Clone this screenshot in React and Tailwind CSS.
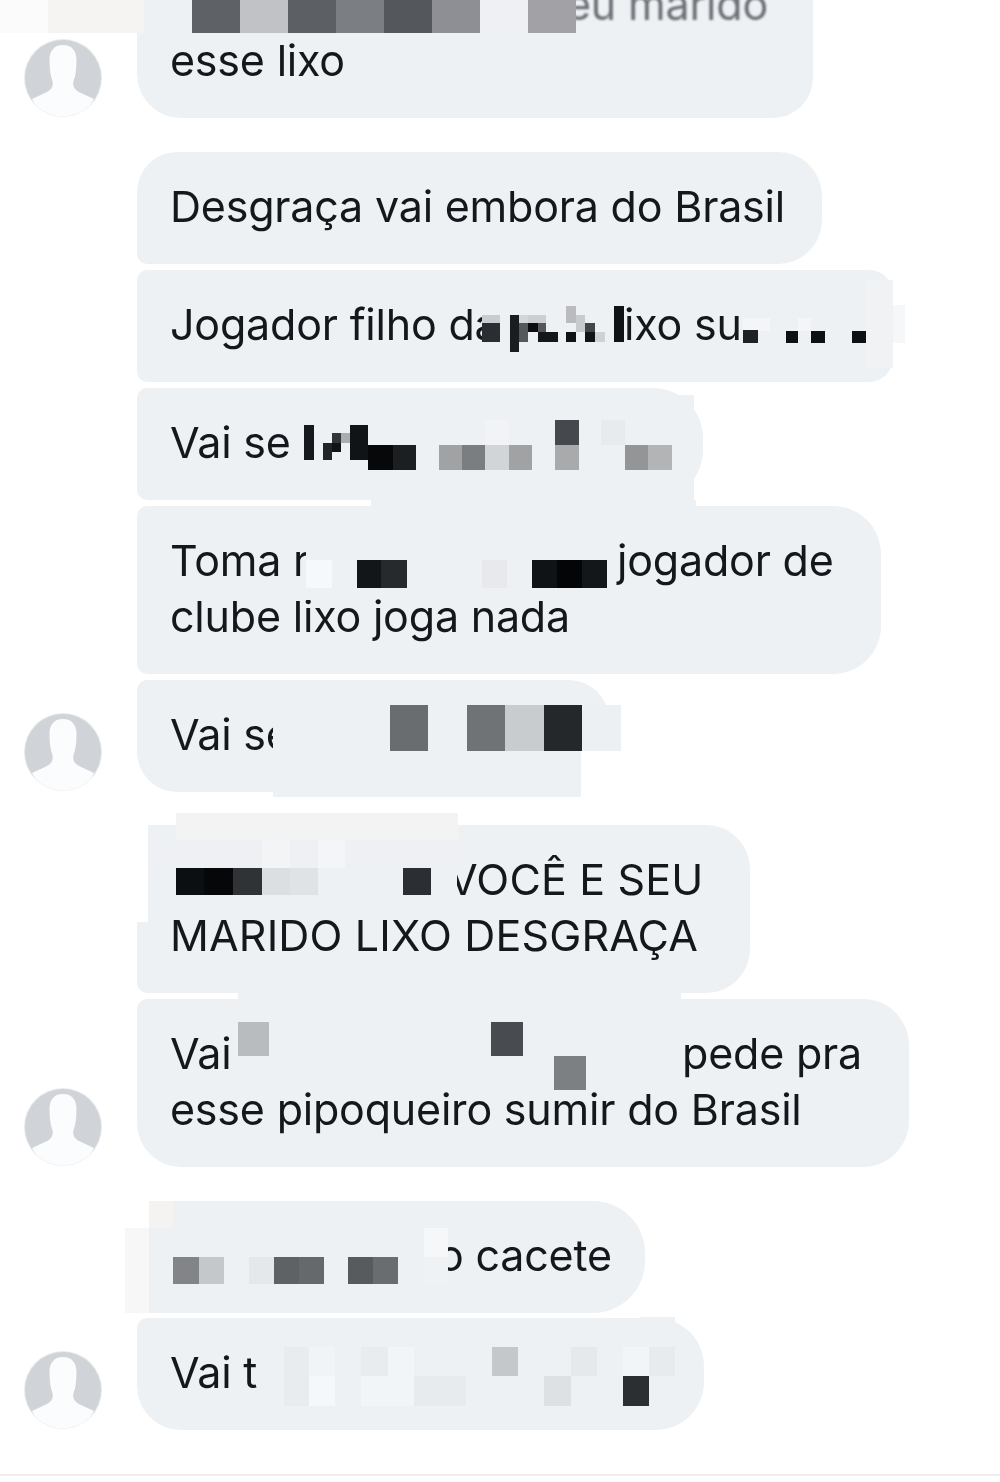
const BG = "#edf1f4";

const c = (x1, y1, x2, y2, color) => ({ x1, y1, x2, y2, color });

function Mosaic({ ox, oy, cells }) {
  return cells.map((m, i) => (
    <div
      key={i}
      className="absolute"
      style={{ left: m.x1 - ox, top: m.y1 - oy, width: m.x2 - m.x1, height: m.y2 - m.y1, backgroundColor: m.color }}
    />
  ));
}

function Avatar() {
  return (
    <svg viewBox="0 0 80 80" className="h-[80px] w-[80px]">
      <defs>
        <clipPath id="avatar-clip">
          <circle cx="40" cy="40" r="38.5" />
        </clipPath>
      </defs>
      <circle cx="40" cy="40" r="39" fill="#e8eaec" />
      <circle cx="40" cy="40" r="38" fill="#d0d3d7" />
      <path
        clipPath="url(#avatar-clip)"
        fill="#fbfcfd"
        d="M40 7C31 7 26.500 13 26.500 22C26.500 31 27.500 38 29.500 43C30.500 48 28.500 52 23 54.500L9 61L20 80L60 80L71 61L57 54.500C51.500 52 49.500 48 50.500 43C52.500 38 53.500 31 53.500 22C53.500 13 49 7 40 7Z"
      />
    </svg>
  );
}

function Row({ avatar, className, children }) {
  return (
    <div className={`flex items-end ${className}`}>
      <div className="w-[137px] shrink-0 pl-[23px]">{avatar && <Avatar />}</div>
      {children}
    </div>
  );
}

function Line({ children }) {
  return <p className="flex h-[56px] items-center whitespace-pre blur-[0.3px]">{children}</p>;
}

const bubble = "relative bg-[#edf1f4] pr-[33px] pl-[33px] pt-[26px] pb-[30px]";

export default function App() {
  return (
    <div className="relative h-[1482px] w-[1000px] overflow-hidden bg-white font-['Inter','Liberation_Sans',sans-serif] text-[43px] leading-[56px] tracking-[-0.2px] text-[#14181c]">
      {/* 1 */}
      <Row avatar className="mt-[-50px]">
        <div className={`${bubble} w-[676px] rounded-br-[40px] rounded-bl-[44px]`}>
          <Line>
            <span className="w-[396px] shrink-0" />
            <span className="text-[#6c6f75] blur-[1px]">eu marido</span>
          </Line>
          <Line>esse lixo</Line>
          <Mosaic
            ox={137}
            oy={-50}
            cells={[
              c(0, 0, 48, 33, "#fbfbfb"),
              c(48, 0, 144, 33, "#f5f4f3"),
              c(144, 0, 192, 33, BG),
              c(192, 0, 240, 33, "#5e6166"),
              c(240, 0, 288, 33, "#c0c2c6"),
              c(288, 0, 336, 33, "#5c5f64"),
              c(336, 0, 384, 33, "#7b7e83"),
              c(384, 0, 432, 33, "#54575c"),
              c(432, 0, 480, 33, "#8d8f94"),
              c(480, 0, 528, 33, "#eef0f4"),
              c(528, 0, 576, 33, "#a2a1a6"),
            ]}
          />
        </div>
      </Row>

      {/* 2 */}
      <Row className="mt-[34px]">
        <div className={`${bubble} w-[685px] rounded-tl-[40px] rounded-r-[44px] rounded-bl-[10px]`}>
          <Line>Desgraça vai embora do Brasil</Line>
        </div>
      </Row>

      {/* 3 */}
      <Row className="mt-[6px]">
        <div className={`${bubble} w-[756px] rounded-l-[10px] rounded-r-[24px]`}>
          <Line>
            <span className="w-[454px] shrink-0">Jogador filho da</span>
            <span>ixo su</span>
          </Line>
          <Mosaic
            ox={137}
            oy={270}
            cells={[
              c(865, 280, 893, 368, "#f0f2f4"),
              c(893, 305, 905, 343, "#f6f7f8"),
              c(482, 315, 500, 323, "#c8ccd0"),
              c(482, 323, 500, 342, "#2a2e32"),
              c(500, 315, 510, 342, BG),
              c(510, 315, 519, 352, "#1a1d20"),
              c(519, 315, 528, 323, "#d4d7da"),
              c(519, 323, 528, 342, "#55585b"),
              c(528, 315, 546, 323, "#ccced1"),
              c(528, 323, 538, 332, "#0b0d0f"),
              c(538, 323, 546, 332, "#55585b"),
              c(538, 332, 558, 342, "#15181b"),
              c(566, 306, 576, 323, "#b9bbbe"),
              c(566, 332, 576, 342, "#101316"),
              c(576, 315, 585, 332, "#c8cacd"),
              c(585, 323, 595, 332, "#44474a"),
              c(585, 332, 595, 342, "#111417"),
              c(595, 332, 605, 342, "#cfd2d5"),
              c(614, 306, 624, 342, "#101316"),
              c(743, 318, 770, 331, "#f3f5f8"),
              c(743, 331, 786, 343, BG),
              c(798, 318, 811, 331, "#f3f5f8"),
              c(743, 330, 758, 343, "#1e2226"),
              c(786, 331, 798, 343, "#0e1114"),
              c(811, 331, 825, 343, "#0e1114"),
              c(852, 331, 866, 343, "#0e1114"),
            ]}
          />
        </div>
      </Row>

      {/* 4 */}
      <Row className="mt-[6px]">
        <div className={`${bubble} w-[566px] rounded-l-[10px] rounded-r-[50px]`}>
          <Line>Vai se</Line>
          <Mosaic
            ox={137}
            oy={388}
            cells={[
              c(640, 395, 694, 500, BG),
              c(371, 500, 696, 506, BG),
              c(304, 425, 314, 460, "#15181c"),
              c(323, 443, 332, 460, "#222528"),
              c(332, 433, 341, 443, "#333639"),
              c(332, 443, 341, 452, "#111417"),
              c(341, 433, 350, 443, "#aaacae"),
              c(350, 425, 368, 460, "#111417"),
              c(368, 445, 393, 470, "#060809"),
              c(393, 445, 416, 470, "#1c1f21"),
              c(439, 445, 462, 470, "#a0a2a4"),
              c(462, 445, 485, 470, "#7b7e80"),
              c(485, 420, 509, 445, "#f1f3f6"),
              c(485, 445, 509, 470, "#d2d5d8"),
              c(509, 445, 532, 470, "#a0a2a4"),
              c(555, 420, 579, 445, "#45484c"),
              c(555, 445, 579, 470, "#a8aaac"),
              c(601, 420, 625, 445, "#e8ebee"),
              c(625, 445, 648, 470, "#939597"),
              c(648, 445, 672, 470, "#b2b4b6"),
            ]}
          />
        </div>
      </Row>

      {/* 5 */}
      <Row className="mt-[6px]">
        <div className={`${bubble} w-[744px] rounded-l-[10px] rounded-r-[48px]`}>
          <Line>
            <span className="w-[447px] shrink-0">Toma r</span>
            <span>jogador de</span>
          </Line>
          <Line>clube lixo joga nada</Line>
          <Mosaic
            ox={137}
            oy={506}
            cells={[
              c(306, 540, 332, 600, BG),
              c(306, 560, 332, 588, "#f6f9fb"),
              c(357, 560, 381, 588, "#131618"),
              c(381, 560, 407, 588, "#272a2c"),
              c(482, 560, 507, 588, "#e7e9ec"),
              c(532, 560, 557, 588, "#101315"),
              c(557, 560, 582, 588, "#030506"),
              c(582, 560, 607, 588, "#14171a"),
            ]}
          />
        </div>
      </Row>

      {/* 6 */}
      <Row avatar className="mt-[6px]">
        <div className={`${bubble} w-[472px] rounded-tl-[10px] rounded-tr-[40px] rounded-bl-[40px]`}>
          <Line>Vai se</Line>
          <Mosaic
            ox={137}
            oy={680}
            cells={[
              c(273, 692, 581, 797, BG),
              c(581, 751, 621, 797, "#ffffff"),
              c(390, 705, 428, 751, "#6a6d70"),
              c(467, 705, 505, 751, "#707376"),
              c(505, 705, 544, 751, "#c8cccf"),
              c(544, 705, 582, 751, "#24282b"),
              c(582, 705, 621, 751, "#edf0f3"),
            ]}
          />
        </div>
      </Row>

      {/* 7 */}
      <Row className="mt-[33px]">
        <div className={`${bubble} w-[613px] rounded-r-[44px] rounded-bl-[10px] tracking-[0.15px]`}>
          <Line>
            <span className="w-[278px] shrink-0" />
            <span>VOCÊ E SEU</span>
          </Line>
          <Line>MARIDO LIXO DESGRAÇA</Line>
          <Mosaic
            ox={137}
            oy={825}
            cells={[
              c(137, 825, 148, 922, "#ffffff"),
              c(176, 813, 458, 840, "#f3f3f3"),
              c(148, 840, 468, 868, "#eef0f3"),
              c(262, 840, 290, 868, "#f2f4f6"),
              c(318, 840, 345, 868, "#f3f5f8"),
              c(431, 862, 457, 900, BG),
              c(176, 868, 204, 895, "#0c0f11"),
              c(204, 868, 233, 895, "#050709"),
              c(233, 868, 262, 895, "#303336"),
              c(262, 868, 290, 895, "#dcdfe2"),
              c(290, 868, 318, 895, "#e0e3e6"),
              c(403, 868, 431, 895, "#2b2e32"),
            ]}
          />
        </div>
      </Row>

      {/* 8 */}
      <Row avatar className="mt-[6px]">
        <div className={`${bubble} w-[772px] rounded-tl-[10px] rounded-r-[46px] rounded-bl-[44px]`}>
          <Line>
            <span className="w-[512px] shrink-0">Vai</span>
            <span>pede pra</span>
          </Line>
          <Line>esse pipoqueiro sumir do Brasil</Line>
          <Mosaic
            ox={137}
            oy={999}
            cells={[
              c(238, 993, 681, 999, BG),
              c(238, 1022, 269, 1056, "#b9bcbf"),
              c(491, 1022, 523, 1056, "#484b4f"),
              c(554, 1056, 586, 1090, "#7d8083"),
            ]}
          />
        </div>
      </Row>

      {/* 9 */}
      <Row className="mt-[34px]">
        <div className={`${bubble} w-[508px] rounded-r-[52px]`}>
          <Line>
            <span className="w-[268px] shrink-0" />
            <span>o cacete</span>
          </Line>
          <Mosaic
            ox={137}
            oy={1201}
            cells={[
              c(137, 1201, 149, 1228, "#ffffff"),
              c(125, 1228, 149, 1313, "#f8f7f7"),
              c(149, 1201, 173, 1228, "#f4f3f2"),
              c(173, 1257, 199, 1284, "#828487"),
              c(199, 1257, 224, 1284, "#c5c8cb"),
              c(249, 1257, 274, 1284, "#e5e8eb"),
              c(274, 1257, 299, 1284, "#5f6265"),
              c(299, 1257, 324, 1284, "#66696c"),
              c(348, 1257, 373, 1284, "#585b5e"),
              c(373, 1257, 398, 1284, "#6a6d70"),
              c(424, 1228, 448, 1257, "#f5f7f9"),
              c(424, 1257, 448, 1284, "#eff2f4"),
            ]}
          />
        </div>
      </Row>

      {/* 10 */}
      <Row avatar className="mt-[5px]">
        <div className={`${bubble} w-[567px] rounded-tl-[10px] rounded-tr-[48px] rounded-br-[48px] rounded-bl-[44px]`}>
          <Line>Vai t</Line>
          <Mosaic
            ox={137}
            oy={1318}
            cells={[
              c(640, 1317, 675, 1345, BG),
              c(284, 1347, 309, 1406, "#e9ecef"),
              c(309, 1347, 335, 1376, "#f1f4f6"),
              c(309, 1376, 335, 1406, "#f4f8fb"),
              c(361, 1347, 388, 1376, "#e9ecef"),
              c(388, 1347, 414, 1376, "#f2f5f7"),
              c(361, 1376, 414, 1406, "#f2f5f7"),
              c(414, 1376, 466, 1406, "#e8ebee"),
              c(492, 1347, 518, 1376, "#c5c8cb"),
              c(544, 1376, 571, 1406, "#dee1e4"),
              c(571, 1347, 597, 1376, "#e6e9ec"),
              c(623, 1347, 649, 1376, "#f2f5f8"),
              c(623, 1376, 649, 1406, "#2c2f32"),
              c(649, 1347, 675, 1376, "#e8ebee"),
            ]}
          />
        </div>
      </Row>

      {/* footer hairline */}
      <div className="mt-[44px] h-[2px] w-full bg-[#eeeeee]" />
    </div>
  );
}
